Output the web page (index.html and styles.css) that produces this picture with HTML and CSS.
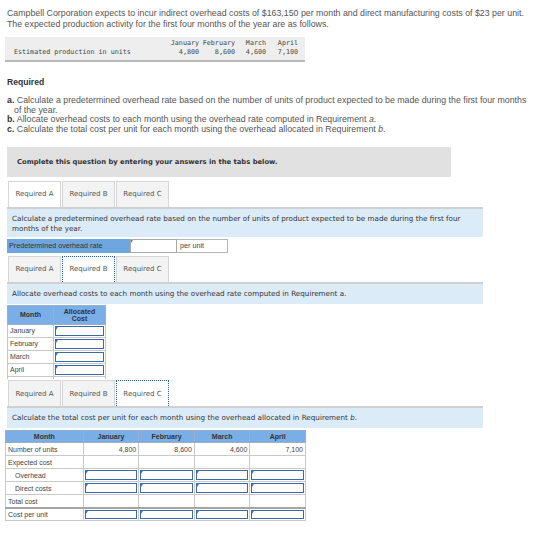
FILE: index.html
```html
<!DOCTYPE html>
<html lang="en">
<head>
<meta charset="utf-8">
<title>Campbell Corporation – Overhead Allocation</title>
<link rel="stylesheet" href="styles.css">
</head>
<body>
<main class="page">
  <p class="intro">Campbell Corporation expects to incur indirect overhead costs of $163,150 per month and direct manufacturing costs of $23 per unit.<br>The expected production activity for the first four months of the year are as follows.</p>

  <div class="units">
    <div class="units-row"><span></span><span>January</span><span>February</span><span>March</span><span>April</span></div>
    <div class="units-row"><span>Estimated production in units</span><span>4,800</span><span>8,600</span><span>4,600</span><span>7,100</span></div>
  </div>

  <h4 class="req-title">Required</h4>
  <ul class="req-list">
    <li><b>a.</b> Calculate a predetermined overhead rate based on the number of units of product expected to be made during the first four months of the year.</li>
    <li><b>b.</b> Allocate overhead costs to each month using the overhead rate computed in Requirement <i>a</i>.</li>
    <li><b>c.</b> Calculate the total cost per unit for each month using the overhead allocated in Requirement <i>b</i>.</li>
  </ul>

  <div class="notice">Complete this question by entering your answers in the tabs below.</div>

  <!-- Requirement A -->
  <section class="tabset">
    <div class="tabs">
      <span class="tab active">Required A</span><span class="tab">Required B</span><span class="tab">Required C</span>
    </div>
    <div class="prompt tall">Calculate a predetermined overhead rate based on the number of units of product expected to be made during the first four months of the year.</div>
    <div class="rate-row">
      <span class="rate-label">Predetermined overhead rate</span>
      <span class="rate-input"></span>
      <span class="rate-unit">per unit</span>
    </div>
  </section>

  <!-- Requirement B -->
  <section class="tabset">
    <div class="tabs">
      <span class="tab">Required A</span><span class="tab active focus">Required B</span><span class="tab">Required C</span>
    </div>
    <div class="prompt">Allocate overhead costs to each month using the overhead rate computed in Requirement a.</div>
    <table class="grid alloc">
      <thead>
        <tr><th class="c-month">Month</th><th class="c-cost">Allocated<br>Cost</th></tr>
      </thead>
      <tbody>
        <tr><td>January</td><td class="in"><span class="field"></span></td></tr>
        <tr><td>February</td><td class="in"><span class="field"></span></td></tr>
        <tr><td>March</td><td class="in"><span class="field"></span></td></tr>
        <tr><td>April</td><td class="in"><span class="field"></span></td></tr>
        <tr class="spacer"><td></td><td></td></tr>
      </tbody>
    </table>
  </section>

  <!-- Requirement C -->
  <section class="tabset last">
    <div class="tabs">
      <span class="tab">Required A</span><span class="tab">Required B</span><span class="tab active focus">Required C</span>
    </div>
    <div class="prompt">Calculate the total cost per unit for each month using the overhead allocated in Requirement <i>b</i>.</div>
    <table class="grid cost">
      <thead>
        <tr><th class="k">Month</th><th>January</th><th>February</th><th>March</th><th>April</th></tr>
      </thead>
      <tbody>
        <tr><td>Number of units</td><td class="num">4,800</td><td class="num">8,600</td><td class="num">4,600</td><td class="num">7,100</td></tr>
        <tr><td>Expected cost</td><td></td><td></td><td></td><td></td></tr>
        <tr><td class="sub">Overhead</td><td class="in"><span class="field"></span></td><td class="in"><span class="field"></span></td><td class="in"><span class="field"></span></td><td class="in"><span class="field"></span></td></tr>
        <tr><td class="sub">Direct costs</td><td class="in"><span class="field"></span></td><td class="in"><span class="field"></span></td><td class="in"><span class="field"></span></td><td class="in"><span class="field"></span></td></tr>
        <tr><td>Total cost</td><td></td><td></td><td></td><td></td></tr>
        <tr class="total"><td>Cost per unit</td><td class="in"><span class="field"></span></td><td class="in"><span class="field"></span></td><td class="in"><span class="field"></span></td><td class="in"><span class="field"></span></td></tr>
      </tbody>
    </table>
  </section>
</main>
</body>
</html>
```

FILE: styles.css
```css
* { box-sizing: border-box; }

body {
  margin: 0;
  background: #fff;
}

.page {
  padding: 8px 0 0 7px;
  font-family: "Liberation Sans", Arial, sans-serif;
  color: #555;
}

/* problem statement */
.intro {
  margin: 0;
  font-size: 8.8px;
  line-height: 11px;
  color: #555;
}

.units {
  margin: 7px 0 0 -2px;
  width: 300px;
  padding: 2px 7px 4px 0;
  background: #eeeeee;
  border-bottom: 2px solid #b9b9b9;
  font-family: "DejaVu Sans Mono", "Liberation Mono", monospace;
  font-size: 6.7px;
  line-height: 8.5px;
  color: #444;
}

.units-row {
  display: grid;
  grid-template-columns: 161px 33px 36px 31px 32px;
}

.units-row span { text-align: right; white-space: nowrap; }
.units-row span:first-child { text-align: left; padding-left: 9px; }

.req-title {
  margin: 15px 0 0;
  font-size: 8.6px;
  line-height: 10px;
  font-weight: bold;
  color: #333;
}

.req-list {
  list-style: none;
  margin: 9px 0 0;
  padding: 0;
  width: 525px;
  font-size: 8.8px;
  line-height: 9.7px;
  color: #555;
}

.req-list li {
  padding-left: 7px;
  text-indent: -7px;
}

.req-list b { color: #333; }

.notice {
  margin-top: 12px;
  width: 444px;
  height: 30px;
  padding-left: 10px;
  display: flex;
  align-items: center;
  background: #e1e1e1;
  font-family: "DejaVu Sans", Verdana, sans-serif;
  font-size: 6.8px;
  font-weight: bold;
  color: #333;
}

/* tabbed answer panels */
.tabset {
  margin-top: 4px;
  font-family: "DejaVu Sans", Verdana, sans-serif;
  font-size: 7px;
  color: #444;
}

.tabset + .tabset { margin-top: 3px; }
.tabset.last { margin-top: 1px; }

.tabs {
  display: flex;
  padding-left: 1px;
}

.tab {
  width: 53px;
  height: 26px;
  display: flex;
  align-items: center;
  justify-content: center;
  background: #f3f3f3;
  border: 1px solid #d6d6d6;
  border-bottom: none;
  color: #555;
}

.tab + .tab { margin-left: 1px; }

.tab.active { background: #fff; }

.tab.focus {
  border: 1px dotted #2a5db0;
  border-bottom: none;
}

.prompt {
  width: 476px;
  padding: 5px 5px 0;
  height: 22px;
  background: #dcebf8;
  border-top: 2px solid #d0d0d0;
  font-size: 7.2px;
  line-height: 10px;
  color: #333;
}

.prompt.tall { height: 30px; }

.rate-row {
  display: flex;
  margin-top: 2px;
  height: 14px;
  font-family: "Liberation Sans", Arial, sans-serif;
  font-size: 7.2px;
}

.rate-label {
  width: 123px;
  padding-left: 2px;
  display: flex;
  align-items: center;
  background: #6fa6e0;
  color: #333;
}

.rate-input {
  position: relative;
  width: 47px;
  border: 1px solid #a9a9a9;
  background: #fff;
}

.rate-unit {
  width: 51px;
  padding-left: 3px;
  display: flex;
  align-items: center;
  border: 1px solid #b5b5b5;
  border-left: none;
  color: #444;
}

/* answer grids */
.grid {
  border-collapse: collapse;
  font-family: "Liberation Sans", Arial, sans-serif;
  font-size: 7px;
  color: #444;
}

.grid th {
  background: #7aaee6;
  color: #333;
  font-weight: bold;
  border: 1px solid #9bb0c8;
  line-height: 7px;
  padding: 0;
}

.grid td {
  border: 1px solid #c9c9c9;
  padding: 0 2px;
  white-space: nowrap;
}

.grid td.in { padding: 1px; }

.field {
  position: relative;
  display: block;
  height: 100%;
  border: 1.5px solid #3d6aa5;
  background: #fff;
}

/* small entry marker in the corner of each answer box */
.field::before,
.rate-input::before {
  content: "";
  position: absolute;
  left: 0;
  top: 0;
  border-top: 3px solid #2f7de1;
  border-right: 2px solid transparent;
}

.alloc {
  margin-top: 1px;
  width: 99px;
}

.alloc th { height: 19px; }
.alloc .c-month { width: 46px; }
.alloc td { height: 13px; }
.alloc tr.spacer td { height: 3px; border-bottom: none; }

.cost {
  margin: 2px 0 0 -2px;
  width: 301px;
}

.cost th { height: 12px; width: 56px; }
.cost th.k { width: 78px; }
.cost td { height: 13px; }
.cost td.num { text-align: right; }
.cost td.sub { padding-left: 9px; }
.cost tr.total td { border-top: 2px solid #a5a5a5; }
```
